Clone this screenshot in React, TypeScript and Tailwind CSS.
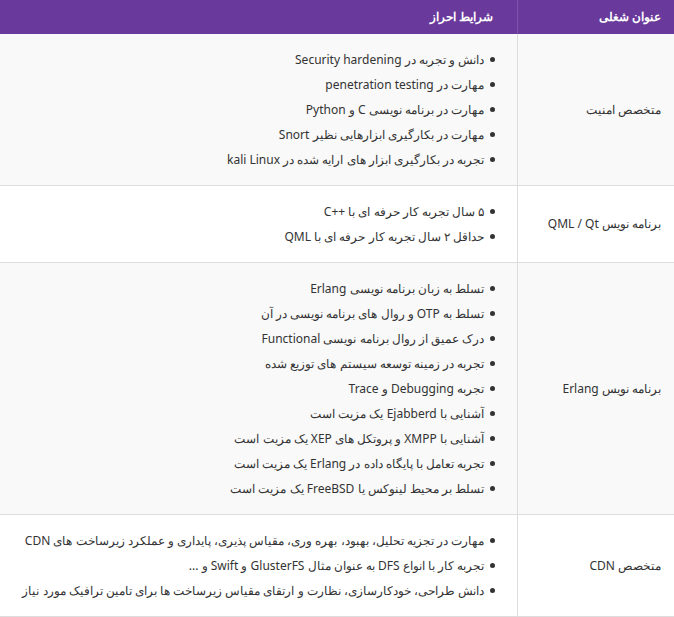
const ROWS: { title: string; items: string[]; bg: string }[] = [
  {
    title: "متخصص امنیت",
    bg: "bg-[#f9f9f9]",
    items: [
      "دانش و تجربه در Security hardening",
      "مهارت در penetration testing",
      "مهارت در برنامه نویسی C و Python",
      "مهارت در بکارگیری ابزارهایی نظیر Snort",
      "تجربه در بکارگیری ابزار های ارایه شده در kali Linux",
    ],
  },
  {
    title: "برنامه نویس QML / Qt",
    bg: "bg-white",
    items: ["۵ سال تجربه کار حرفه ای با ++C", "حداقل ۲ سال تجربه کار حرفه ای با  QML"],
  },
  {
    title: "برنامه نویس Erlang",
    bg: "bg-[#f9f9f9]",
    items: [
      "تسلط به زبان برنامه نویسی Erlang",
      "تسلط به OTP و روال های برنامه نویسی در آن",
      "درک عمیق از روال برنامه نویسی Functional",
      "تجربه در زمینه توسعه سیستم های توزیع شده",
      "تجربه Debugging و Trace",
      "آشنایی با Ejabberd یک مزیت است",
      "آشنایی با XMPP و پروتکل های XEP یک مزیت است",
      "تجربه تعامل با پایگاه داده در Erlang یک مزیت است",
      "تسلط بر محیط لینوکس یا  FreeBSD  یک مزیت است",
    ],
  },
  {
    title: "متخصص CDN",
    bg: "bg-white",
    items: [
      "مهارت در تجزیه تحلیل، بهبود، بهره وری، مقیاس پذیری، پایداری و عملکرد زیرساخت های CDN",
      "تجربه کار با انواع  DFS به عنوان مثال GlusterFS و Swift و ...",
      "دانش طراحی، خودکارسازی، نظارت و ارتقای مقیاس زیرساخت ها برای تامین ترافیک مورد نیاز",
    ],
  },
];

export default function App() {
  return (
    <div dir="rtl" className="w-[674px] text-[12px] text-[#333] font-['DejaVu_Sans',sans-serif]">
      <div className="flex h-[34px] bg-[#69399b] text-white font-bold">
        <div className="w-[157px] flex items-center pr-[13px] border-l border-[#7d55a8]">عنوان شغلی</div>
        <div className="flex-1 flex items-center pr-[24px]">شرایط احراز</div>
      </div>
      {ROWS.map((r) => (
        <div key={r.title} className={`flex border-b border-[#dddddd] ${r.bg}`}>
          <div className="w-[157px] flex items-center pr-[13px] border-l border-[#dddddd]">{r.title}</div>
          <ul className="flex-1 py-[13px] pr-[22px]">
            {r.items.map((it) => (
              <li key={it} className="h-[25px] flex items-center gap-[6px] whitespace-nowrap">
                <span className="w-[5px] h-[5px] rounded-full bg-[#333] shrink-0" />
                <span>{it}</span>
              </li>
            ))}
          </ul>
        </div>
      ))}
    </div>
  );
}
